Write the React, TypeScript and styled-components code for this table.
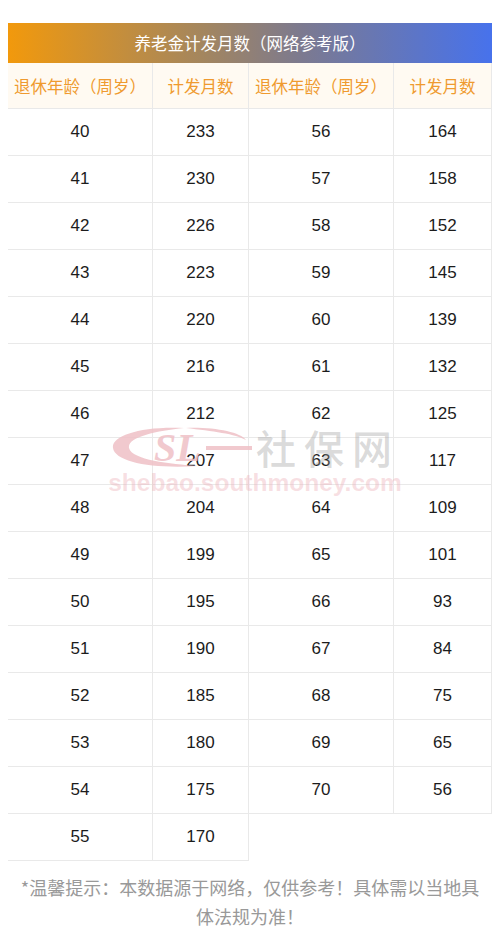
import React from 'react';
import styled, { createGlobalStyle } from 'styled-components';

const leftRows: [number, number][] = [
  [40, 233], [41, 230], [42, 226], [43, 223], [44, 220], [45, 216], [46, 212], [47, 207],
  [48, 204], [49, 199], [50, 195], [51, 190], [52, 185], [53, 180], [54, 175], [55, 170],
];

const rightRows: [number, number][] = [
  [56, 164], [57, 158], [58, 152], [59, 145], [60, 139], [61, 132], [62, 125], [63, 117],
  [64, 109], [65, 101], [66, 93], [67, 84], [68, 75], [69, 65], [70, 56],
];

const GlobalStyle = createGlobalStyle`
  body {
    margin: 8px;
    background: #fff;
    font-family: "Liberation Sans", "Noto Sans CJK SC", sans-serif;
  }
`;

export default function App() {
  return (
    <>
      <GlobalStyle />
      <StyledPage>
        <StyledTitle>养老金计发月数（网络参考版）</StyledTitle>
        <StyledTables>
          <PensionTable rows={leftRows} width={241} />
          <PensionTable rows={rightRows} width={243} />
          <Watermark />
        </StyledTables>
        <StyledNote>*温馨提示：本数据源于网络，仅供参考！具体需以当地具体法规为准！</StyledNote>
      </StyledPage>
    </>
  );
}

function PensionTable({ rows, width }: { rows: [number, number][]; width: number }) {
  return (
    <StyledTable $width={width}>
      <StyledRow>
        <StyledHeadCell $age>退休年龄（周岁）</StyledHeadCell>
        <StyledHeadCell>计发月数</StyledHeadCell>
      </StyledRow>
      {rows.map(([age, months]) => (
        <StyledRow key={age}>
          <StyledCell $age>{age}</StyledCell>
          <StyledCell>{months}</StyledCell>
        </StyledRow>
      ))}
    </StyledTable>
  );
}

function Watermark() {
  return (
    <StyledWatermark>
      <StyledBrand>
        <svg width="142" height="44" viewBox="0 0 142 44">
          <path
            d="M74 3 C30 1 1 11 3 23 C5 37 42 44 88 41 C60 39 22 35 19 23 C17 12 46 6 74 3 Z"
            fill="#efc0c6"
          />
          <path d="M76 3 C104 2 130 7 136 15 C126 9 102 6 76 3 Z" fill="#efc0c6" />
          <text
            x="44"
            y="36"
            fontFamily="Liberation Serif, serif"
            fontWeight="bold"
            fontStyle="italic"
            fontSize="40"
            fill="#efc0c6"
          >
            SL
          </text>
          <rect x="96" y="21" width="46" height="4" fill="#efc0c6" />
        </svg>
        <StyledBrandName>社保网</StyledBrandName>
      </StyledBrand>
      <StyledUrl>shebao.southmoney.com</StyledUrl>
    </StyledWatermark>
  );
}

const StyledPage = styled.main`
  width: 484px;
  padding-top: 15px;
`;

const StyledTitle = styled.div`
  height: 40px;
  line-height: 40px;
  text-align: center;
  color: #fff;
  font-family: "Noto Sans CJK SC", sans-serif;
  font-size: 16.5px;
  background: linear-gradient(90deg, #f2990c 0%, #a4865e 40%, #7d7a8e 60%, #4772ec 100%);
`;

const StyledTables = styled.div`
  position: relative;
  display: flex;
  align-items: flex-start;
`;

const StyledTable = styled.div<{ $width: number }>`
  width: ${(p) => p.$width}px;
  display: flex;
  flex-direction: column;
  & > div:first-child {
    background: #fffaf2;
  }
`;

const StyledRow = styled.div`
  display: flex;
  height: 47px;
  box-sizing: border-box;
  border-bottom: 1px solid #e9e9e9;
  &:first-child {
    height: 46px;
  }
`;

const StyledCell = styled.div<{ $age?: boolean }>`
  flex: ${(p) => (p.$age ? '0 0 144px' : '1')};
  display: flex;
  align-items: center;
  justify-content: center;
  border-right: 1px solid #e9e9e9;
  font-size: 17px;
  color: #1c1c1c;
`;

const StyledHeadCell = styled(StyledCell)`
  font-family: "Noto Sans CJK SC", sans-serif;
  color: #ef9a2f;
  font-size: 16.5px;
  white-space: nowrap;
`;

const StyledWatermark = styled.div`
  position: absolute;
  left: 97px;
  top: 362px;
  width: 300px;
  display: flex;
  flex-direction: column;
  align-items: center;
  pointer-events: none;
`;

const StyledBrand = styled.div`
  display: flex;
  align-items: center;
  gap: 4px;
  opacity: 0.85;
`;

const StyledBrandName = styled.span`
  font-family: "Noto Sans CJK SC", sans-serif;
  font-size: 40px;
  font-weight: 500;
  letter-spacing: 8px;
  line-height: 44px;
  color: rgba(160, 160, 160, 0.45);
`;

const StyledUrl = styled.div`
  font-family: "Liberation Sans", sans-serif;
  font-size: 24.5px;
  font-weight: bold;
  line-height: 28px;
  color: rgba(236, 170, 180, 0.38);
`;

const StyledNote = styled.p`
  margin: 0;
  padding: 12px 8px 0;
  text-align: center;
  font-family: "Noto Sans CJK SC", sans-serif;
  font-size: 18px;
  line-height: 29px;
  color: #999;
`;
